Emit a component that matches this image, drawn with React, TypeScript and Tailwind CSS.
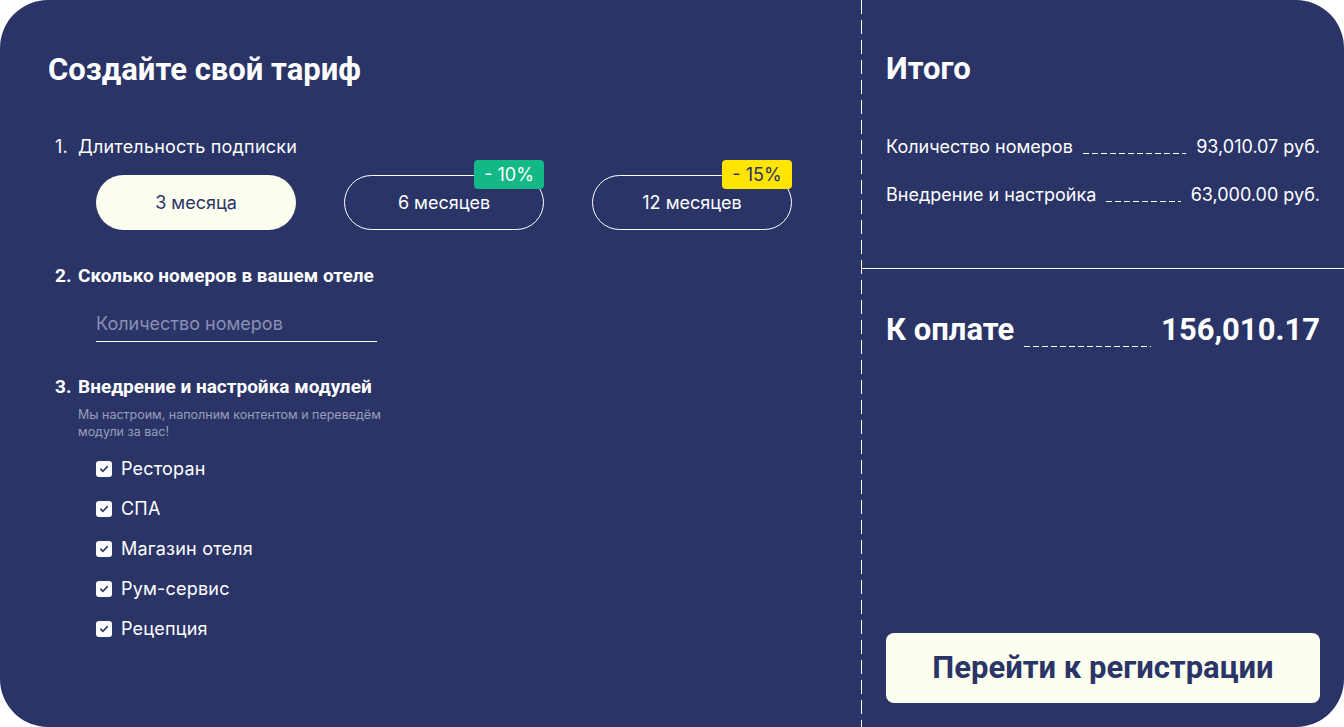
import { useState } from 'react';

const durations = [
  { label: '3 месяца', badge: null },
  { label: '6 месяцев', badge: { text: '- 10%', cls: 'bg-[#12b886] text-white' } },
  { label: '12 месяцев', badge: { text: '- 15%', cls: 'bg-[#ffe500] text-[#2b3467]' } },
];

const modules = ['Ресторан', 'СПА', 'Магазин отеля', 'Рум-сервис', 'Рецепция'];

function Leader() {
  return (
    <div className="flex-1 self-end mb-[5px] mx-[10px] h-px bg-[repeating-linear-gradient(to_right,white_0_6px,transparent_6px_9px)]" />
  );
}

function CheckBox() {
  return (
    <span className="w-4 h-4 rounded-[3px] bg-white flex items-center justify-center shrink-0">
      <svg width="10" height="10" viewBox="0 0 10 10" fill="none">
        <path d="M1.8 5.2 L4 7.3 L8.3 2.6" stroke="#2b3467" strokeWidth="1.6" strokeLinecap="round" strokeLinejoin="round" />
      </svg>
    </span>
  );
}

export default function App() {
  const [active, setActive] = useState(0);
  const [checked, setChecked] = useState(modules.map(() => true));

  return (
    <div className="w-[1344px] h-[727px] bg-white font-['Inter',sans-serif]">
      <div className="w-full h-full rounded-[48px] bg-[#2b3467] flex text-white overflow-hidden">
        {/* left: configurator */}
        <div className="w-[861px] pl-[48px] pt-[51px]">
          <h1 className="font-['Roboto',sans-serif] text-[31px] leading-[38px] font-bold">Создайте свой тариф</h1>

          <div className="mt-[46px] ml-[7px] flex text-[18px] leading-[24px] tracking-[0.2px]">
            <span className="w-[23px]">1.</span>
            <span>Длительность подписки</span>
          </div>
          <div className="mt-[16px] ml-[48px] flex gap-[48px]">
            {durations.map((d, i) => (
              <button
                key={d.label}
                onClick={() => setActive(i)}
                className={`relative w-[200px] h-[55px] rounded-full text-[18px] ${
                  active === i ? 'bg-[#fcfff0] text-[#2b3467]' : 'border border-white text-white'
                }`}
              >
                {d.label}
                {d.badge && (
                  <span
                    className={`absolute -top-[16px] -right-px w-[70px] h-[29px] rounded-[4px] flex items-center justify-center text-[18px] ${d.badge.cls}`}
                  >
                    {d.badge.text}
                  </span>
                )}
              </button>
            ))}
          </div>

          <div className="mt-[34px] ml-[7px] flex font-['Roboto',sans-serif] text-[19px] leading-[24px] font-bold">
            <span className="w-[23px]">2.</span>
            <span>Сколько номеров в вашем отеле</span>
          </div>
          <input
            placeholder="Количество номеров"
            className="mt-[17px] ml-[48px] block w-[281px] h-[37px] bg-transparent border-b border-white text-[18px] text-white placeholder:text-[#8b8fb3] outline-none"
          />

          <div className="mt-[33px] ml-[7px] flex font-['Roboto',sans-serif] text-[19px] leading-[24px] font-bold">
            <span className="w-[23px]">3.</span>
            <span>Внедрение и настройка модулей</span>
          </div>
          <p className="mt-[7px] ml-[30px] w-[322px] text-[12.5px] leading-[17px] text-[#9a9dbb]">
            Мы настроим, наполним контентом и переведём модули за вас!
          </p>
          <div className="mt-[17px] ml-[48px] flex flex-col gap-[16px]">
            {modules.map((m, i) => (
              <label
                key={m}
                className="flex items-center gap-[9px] text-[18px] leading-[24px] tracking-[0.2px] cursor-pointer"
                onClick={() => setChecked(c => c.map((v, j) => (j === i ? !v : v)))}
              >
                {checked[i] ? <CheckBox /> : <span className="w-4 h-4 rounded-[3px] border border-white" />}
                {m}
              </label>
            ))}
          </div>
        </div>

        {/* dashed divider */}
        <div className="w-px h-full bg-[repeating-linear-gradient(to_bottom,white_0_14px,transparent_14px_20px)]" />

        {/* right: summary */}
        <div className="flex-1 flex flex-col">
          <div className="h-[269px] border-b border-white px-[24px] pt-[50px]">
            <h2 className="font-['Roboto',sans-serif] text-[31px] leading-[38px] font-bold">Итого</h2>
            <div className="mt-[47px] flex flex-col gap-[24px] text-[18px] leading-[24px]">
              <div className="flex">
                <span>Количество номеров</span>
                <Leader />
                <span>93,010.07 руб.</span>
              </div>
              <div className="flex">
                <span>Внедрение и настройка</span>
                <Leader />
                <span>63,000.00 руб.</span>
              </div>
            </div>
          </div>
          <div className="flex-1 flex flex-col px-[24px] pb-[24px]">
            <div className="mt-[42px] flex font-['Roboto',sans-serif] text-[31px] leading-[38px] font-bold">
              <span>К оплате</span>
              <div className="flex-1 self-end mb-[2px] mx-[10px] h-px bg-[repeating-linear-gradient(to_right,white_0_6px,transparent_6px_9px)]" />
              <span>156,010.17</span>
            </div>
            <button className="mt-auto h-[70px] rounded-[8px] bg-[#fcfff0] text-[#2b3467] font-['Roboto',sans-serif] text-[31px] font-bold">
              Перейти к регистрации
            </button>
          </div>
        </div>
      </div>
    </div>
  );
}
